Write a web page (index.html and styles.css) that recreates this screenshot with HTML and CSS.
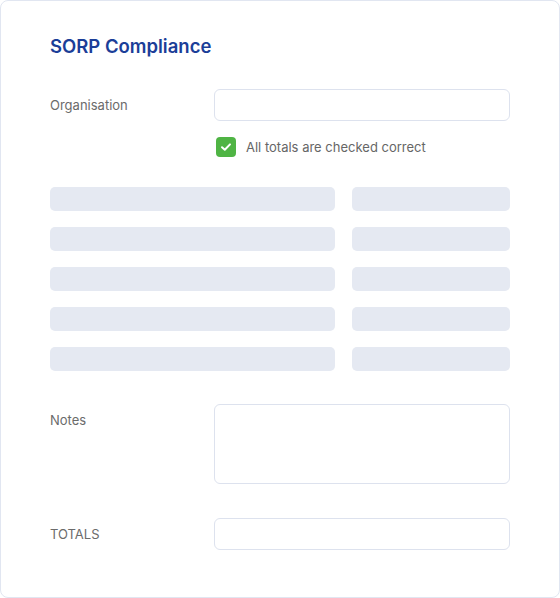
FILE: index.html
```html
<!DOCTYPE html>
<html lang="en">
<head>
    <meta charset="UTF-8">
    <meta name="viewport" content="width=device-width, initial-scale=1.0">
    <title>SORP Compliance</title>
    <link rel="stylesheet" href="styles.css">
</head>
<body>

    <div class="card">
        <h1 class="title">SORP Compliance</h1>

        <div class="form-row">
            <label class="label">Organisation</label>
            <input type="text" class="field">
        </div>

        <div class="check-row">
            <span class="checkbox">
                <svg width="14" height="14" viewBox="0 0 14 14"><path d="M3 7.2 L5.8 9.8 L11 4.4" fill="none" stroke="#fff" stroke-width="2" stroke-linecap="round" stroke-linejoin="round"/></svg>
            </span>
            <span class="check-text">All totals are checked correct</span>
        </div>

        <div class="skeleton">
            <div class="bar"></div><div class="bar"></div>
            <div class="bar"></div><div class="bar"></div>
            <div class="bar"></div><div class="bar"></div>
            <div class="bar"></div><div class="bar"></div>
            <div class="bar"></div><div class="bar"></div>
        </div>

        <div class="form-row notes-row">
            <label class="label">Notes</label>
            <textarea class="field area"></textarea>
        </div>

        <div class="form-row totals-row">
            <label class="label">TOTALS</label>
            <input type="text" class="field">
        </div>
    </div>

</body>
</html>
```

FILE: styles.css
```css
* {
    box-sizing: border-box;
}
body {
    margin: 0;
    padding: 0;
    background: #fff;
    font-family: Inter, "Noto Sans", sans-serif;
}
.card {
    height: 598px;
    border: 1px solid #e1e6f1;
    border-radius: 8px;
    padding: 34px 49px 0 49px;
}
.title {
    margin: 0;
    font-size: 18.5px;
    line-height: 22px;
    font-weight: 600;
    color: #1b3e98;
}
.form-row {
    display: grid;
    grid-template-columns: 164px 1fr;
    margin-top: 32px;
}
.label {
    font-size: 13px;
    line-height: 32px;
    color: #6b6b6b;
}
.field {
    display: block;
    width: 100%;
    height: 32px;
    border: 1px solid #dde2ee;
    border-radius: 6px;
    background: #fff;
    font: inherit;
    padding: 6px 10px;
}
.area {
    height: 80px;
    resize: none;
}
.check-row {
    display: flex;
    align-items: center;
    gap: 10px;
    margin-top: 16px;
    margin-left: 166px;
}
.checkbox {
    width: 20px;
    height: 20px;
    border-radius: 4px;
    background: #4fb444;
    display: flex;
    align-items: center;
    justify-content: center;
}
.check-text {
    font-size: 13px;
    color: #666;
}
.skeleton {
    display: grid;
    grid-template-columns: 1fr 158px;
    column-gap: 17px;
    row-gap: 16px;
    margin-top: 30px;
}
.bar {
    height: 24px;
    border-radius: 5px;
    background: #e5e9f2;
}
.notes-row {
    margin-top: 33px;
}
.totals-row {
    margin-top: 34px;
}
```
